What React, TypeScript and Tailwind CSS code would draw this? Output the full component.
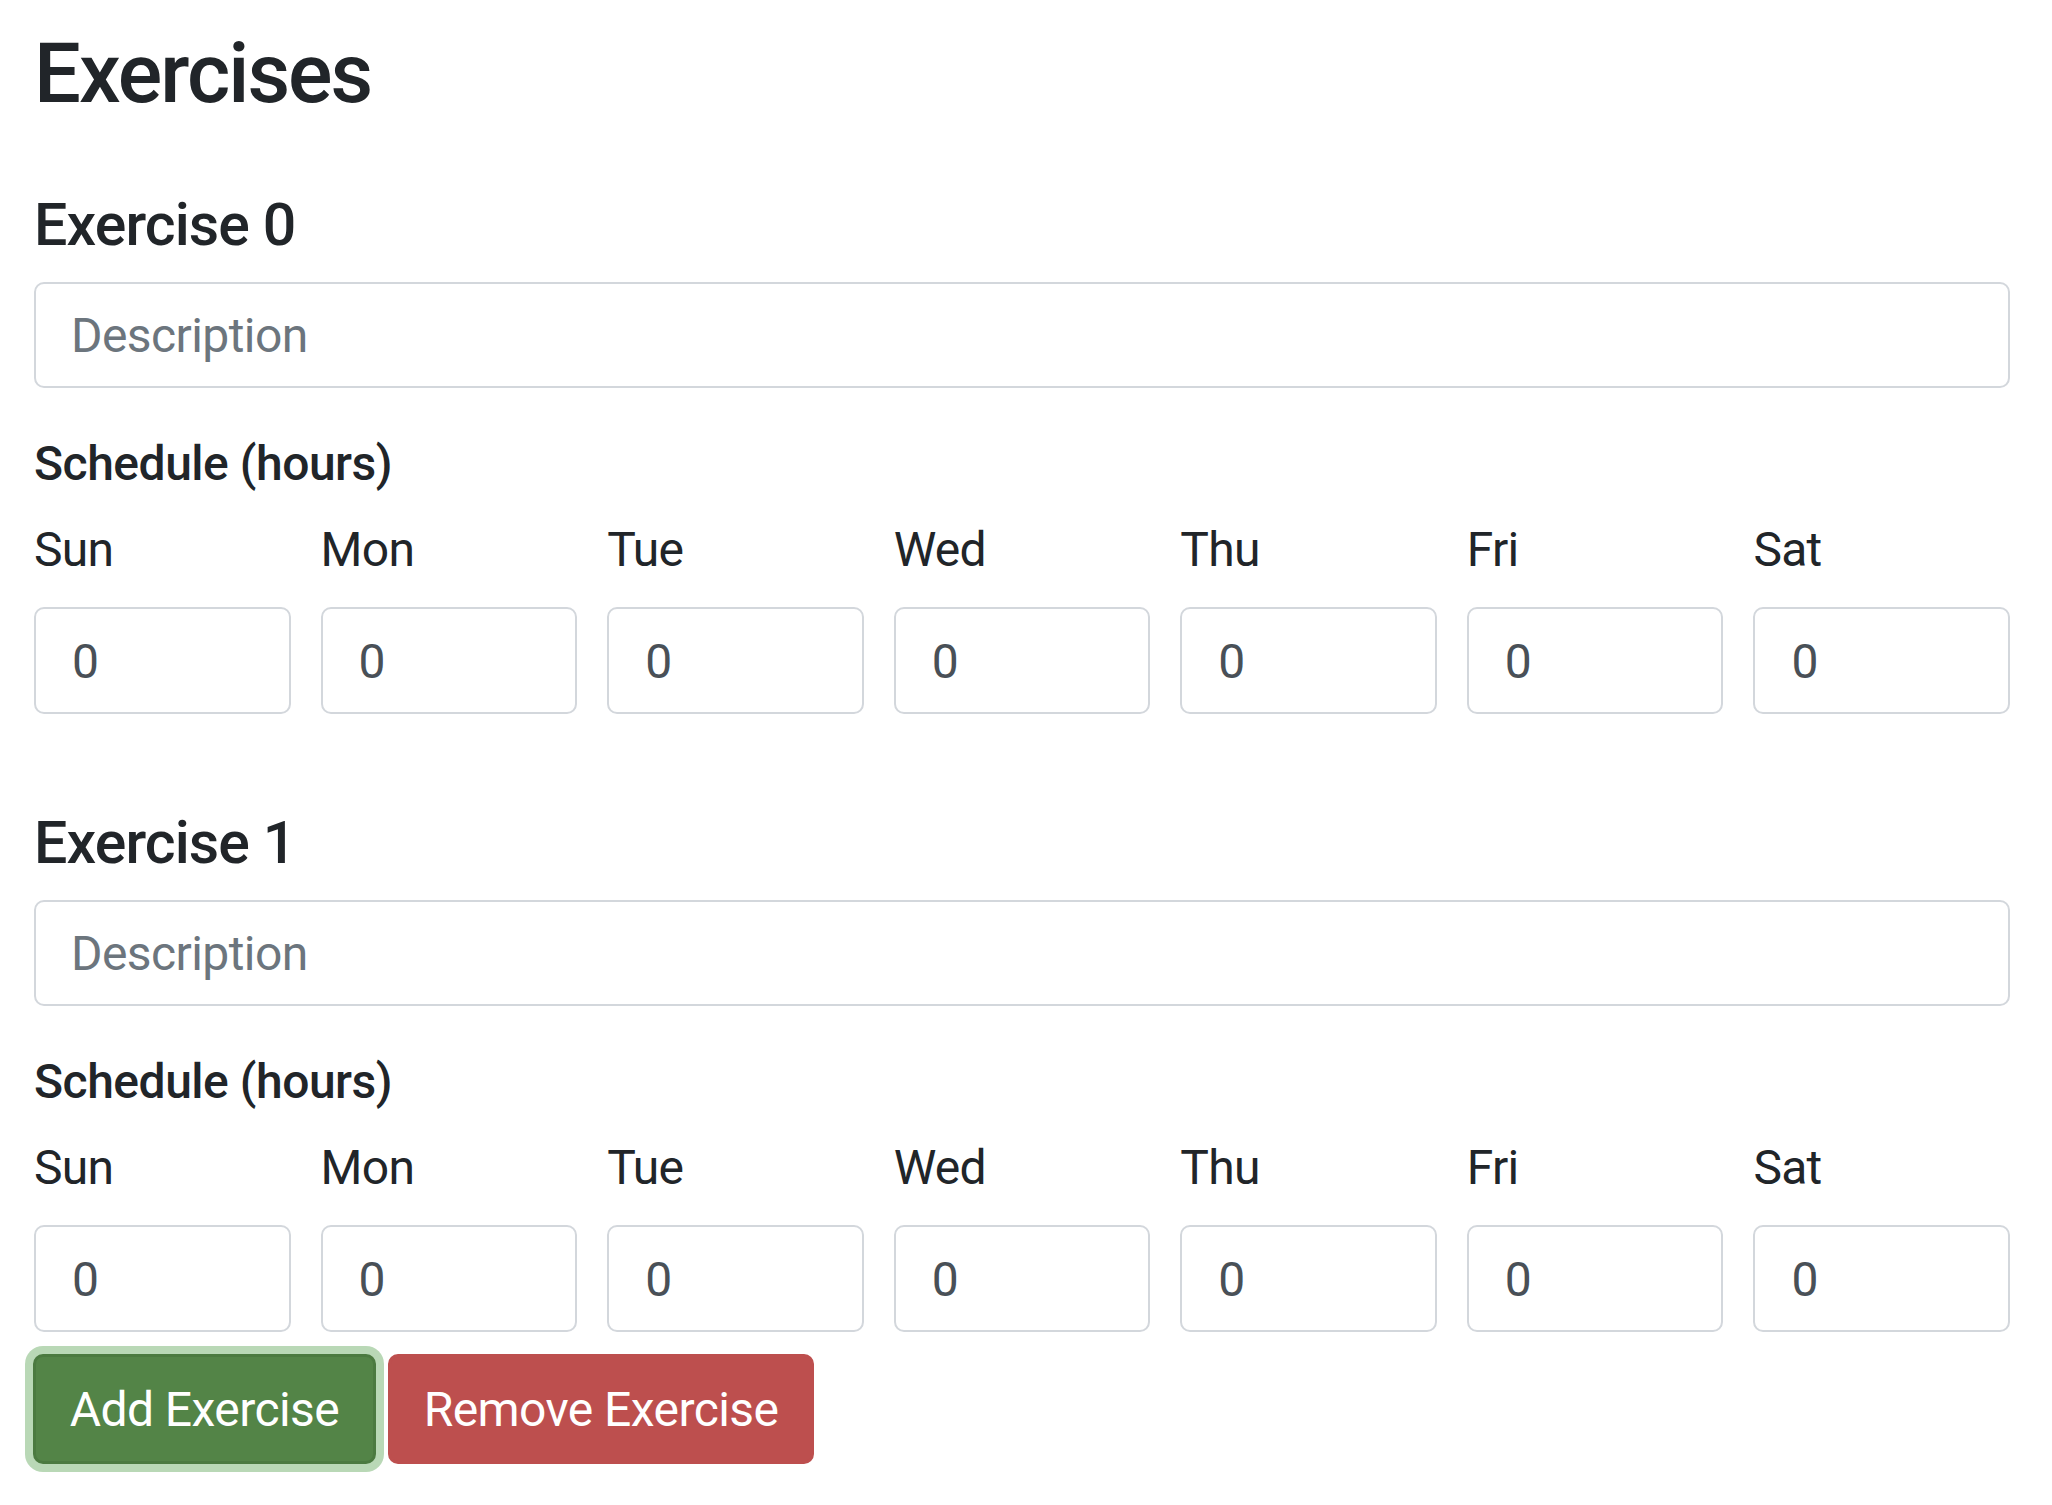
import React from "react";

const days = ["Sun", "Mon", "Tue", "Wed", "Thu", "Fri", "Sat"];

function ExerciseBlock({ index }: { index: number }) {
  return (
    <div className={index === 0 ? "mt-[66px]" : "mt-[94px]"}>
      <h5 className="text-[59px] leading-[70px] font-medium tracking-[-0.015em] text-[#212529]">
        Exercise {index}
      </h5>
      <input
        type="text"
        placeholder="Description"
        className="mt-[22px] block h-[106px] w-full rounded-[10px] border-2 border-[#d3d7dc] bg-white px-[35px] text-[48px] tracking-[-0.012em] text-[#495057] placeholder:text-[#6c757d] outline-none"
      />
      <h6 className="mt-[47px] text-[48px] leading-[58px] font-medium tracking-[-0.01em] text-[#212529]">
        Schedule (hours)
      </h6>
      <div className="mt-[28px] grid grid-cols-7 gap-x-[30px]">
        {days.map((d) => (
          <div key={d} className="flex flex-col">
            <label className="text-[48px] leading-[58px] text-[#212529] tracking-[-0.015em]">
              {d}
            </label>
            <input
              type="text"
              defaultValue="0"
              className="mt-[28px] block h-[107px] w-full rounded-[10px] border-2 border-[#d3d7dc] bg-white px-[36px] pt-[2px] text-[48px] text-[#495057] outline-none"
            />
          </div>
        ))}
      </div>
    </div>
  );
}

export default function App() {
  return (
    <div className="min-h-screen w-full bg-white font-['Roboto','Noto_Sans',sans-serif] pl-[34px] pt-[24px]">
      <div className="w-[1976px]">
        <h1 className="text-[83px] leading-[100px] font-medium tracking-[-0.024em] text-[#212529]">
          Exercises
        </h1>
        <ExerciseBlock index={0} />
        <ExerciseBlock index={1} />
        <div className="mt-[22px] flex items-start">
          <button
            type="button"
            className="-ml-px flex h-[110px] w-[343px] items-center justify-center rounded-[10px] border-[3px] border-[#4b7a40] bg-[#538447] pt-[2px] text-[48px] leading-[58px] tracking-[-0.012em] text-white shadow-[0_0_0_8px_#b9d8b6]"
          >
            Add Exercise
          </button>
          <button
            type="button"
            className="ml-[12px] flex h-[110px] w-[426px] items-center justify-center rounded-[10px] border-[3px] border-[#bd4f4e] bg-[#bd4f4e] pt-[2px] text-[48px] leading-[58px] tracking-[-0.012em] text-white"
          >
            Remove Exercise
          </button>
        </div>
      </div>
    </div>
  );
}
